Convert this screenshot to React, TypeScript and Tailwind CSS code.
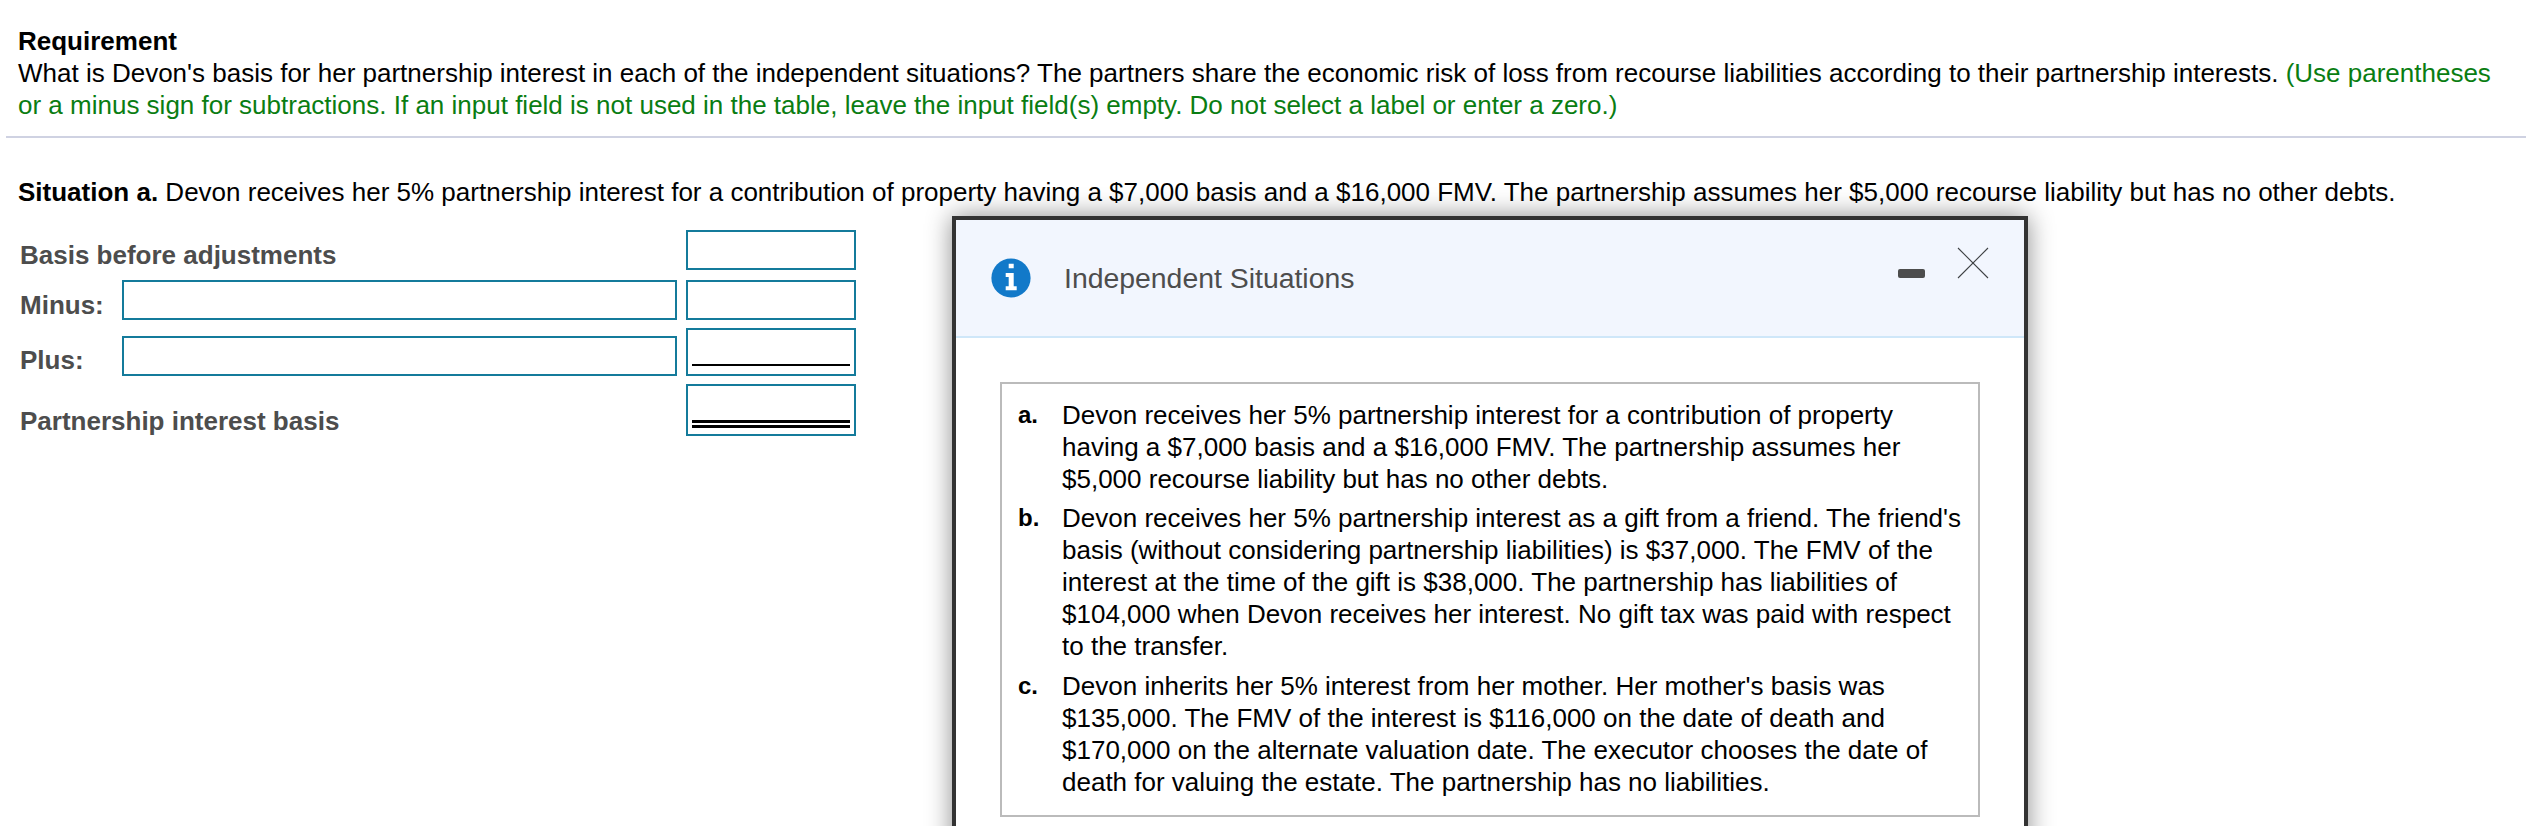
import React from "react";

const box = "block border-2 border-[#147b9b] bg-white";

function InfoIcon() {
  return (
    <svg width="40" height="40" viewBox="-20 -20 40 40" className="block shrink-0">
      <circle cx="0" cy="0" r="19.6" fill="#1279c9" />
      <path d="M-2.3 -14.3H2.7V-9.7H-2.3Z M-5.3 -5H2.7V8.3H5.7V12.3H-5.3V8.3H-2.3V-1H-5.3Z" fill="#fff" />
    </svg>
  );
}

function CloseIcon() {
  return (
    <svg width="32" height="32" viewBox="0 0 32 32" className="block">
      <path d="M1 1L31 31M31 1L1 31" stroke="#3f4245" strokeWidth="1.1" fill="none" />
    </svg>
  );
}

function Item({ label, children, className = "" }: { label: string; children: React.ReactNode; className?: string }) {
  return (
    <div className={"flex " + className}>
      <div className="w-[44px] shrink-0 font-bold text-black text-[24px]">{label}</div>
      <div className="min-w-0 flex-1">{children}</div>
    </div>
  );
}

export default function App() {
  return (
    <div className="relative h-[826px] w-[2534px] overflow-hidden bg-white text-[26px] leading-[32px] text-black font-['Liberation_Sans',Arial,sans-serif]">
      <div className="pt-[25px]">
        <div className="px-[18px]">
          <div className="font-bold">Requirement</div>
          <div className="w-[2498px]">
            What is Devon's basis for her partnership interest in each of the independent situations? The partners share the economic risk of loss from recourse liabilities according to their partnership interests.{" "}
            <span className="text-[#0a7d12]">
              (Use parentheses or a minus sign for subtractions. If an input field is not used in the table, leave the input field(s) empty. Do not select a label or enter a zero.)
            </span>
          </div>
        </div>
        <div className="mt-[15px] ml-[6px] h-[2px] w-[2520px] bg-[#cfd2e2]" />
        <div className="mt-[38px] px-[18px]">
          <span className="font-bold">Situation a.</span> Devon receives her 5% partnership interest for a contribution of property having a $7,000 basis and a $16,000 FMV. The partnership assumes her $5,000 recourse liability but has no other debts.
        </div>
        <div className="mt-[22px] ml-[20px] flex w-[836px] flex-col font-bold text-[#4d4d4d]">
          <div className="flex h-[40px]">
            <div className="w-[666px] pt-[9px]">Basis before adjustments</div>
            <div className={box + " h-[40px] w-[170px]"} />
          </div>
          <div className="mt-[10px] flex h-[40px]">
            <div className="w-[102px] pt-[9px]">Minus:</div>
            <div className={box + " h-[40px] w-[555px]"} />
            <div className={box + " ml-[9px] h-[40px] w-[170px]"} />
          </div>
          <div className="mt-[8px] flex h-[48px] items-end">
            <div className="h-[40px] w-[102px] pt-[8px]">Plus:</div>
            <div className={box + " h-[40px] w-[555px]"} />
            <div className={box + " ml-[9px] flex h-[48px] w-[170px] flex-col justify-end px-[4px] pb-[8px]"}>
              <div className="h-[2px] bg-black" />
            </div>
          </div>
          <div className="mt-[8px] flex h-[52px]">
            <div className="w-[666px] pt-[21px]">Partnership interest basis</div>
            <div className={box + " flex h-[52px] w-[170px] flex-col justify-end px-[4px] pb-[6px]"}>
              <div className="h-[3px] bg-black" />
              <div className="mt-[2px] h-[3px] bg-black" />
            </div>
          </div>
        </div>
      </div>

      <div className="absolute left-[952px] top-[216px] w-[1076px] border-4 border-[#333333] bg-white shadow-[0_0_24px_rgba(0,0,0,0.45)]">
        <div className="relative flex h-[118px] items-center border-b-2 border-[#cfe7f9] bg-[#f2f6fe] pb-[1px] pl-[35px]">
          <InfoIcon />
          <div className="ml-[33px] text-[28.4px] text-[#4d4d4d]">Independent Situations</div>
          <div className="absolute left-[942px] top-[49px] h-[9px] w-[27px] rounded-[2px] bg-[#4d4d4d]" />
          <div className="absolute left-[1001px] top-[27px]">
            <CloseIcon />
          </div>
        </div>
        <div className="p-[44px]">
          <div className="border-2 border-[#bbbbbb] pb-[17px] pl-[16px] pr-[15px] pt-[15px]">
            <Item label="a.">
              Devon receives her 5% partnership interest for a contribution of property having a $7,000 basis and a $16,000 FMV. The partnership assumes her $5,000 recourse liability but has no other debts.
            </Item>
            <Item label="b." className="mt-[7px]">
              Devon receives her 5% partnership interest as a gift from a friend. The friend's basis (without considering partnership liabilities) is $37,000. The FMV of the interest at the time of the gift is $38,000. The partnership has liabilities of $104,000 when Devon receives her interest. No gift tax was paid with respect to the transfer.
            </Item>
            <Item label="c." className="mt-[8px]">
              Devon inherits her 5% interest from her mother. Her mother's basis was $135,000. The FMV of the interest is $116,000 on the date of death and $170,000 on the alternate valuation date. The executor chooses the date of death for valuing the estate. The partnership has no liabilities.
            </Item>
          </div>
        </div>
      </div>
    </div>
  );
}
